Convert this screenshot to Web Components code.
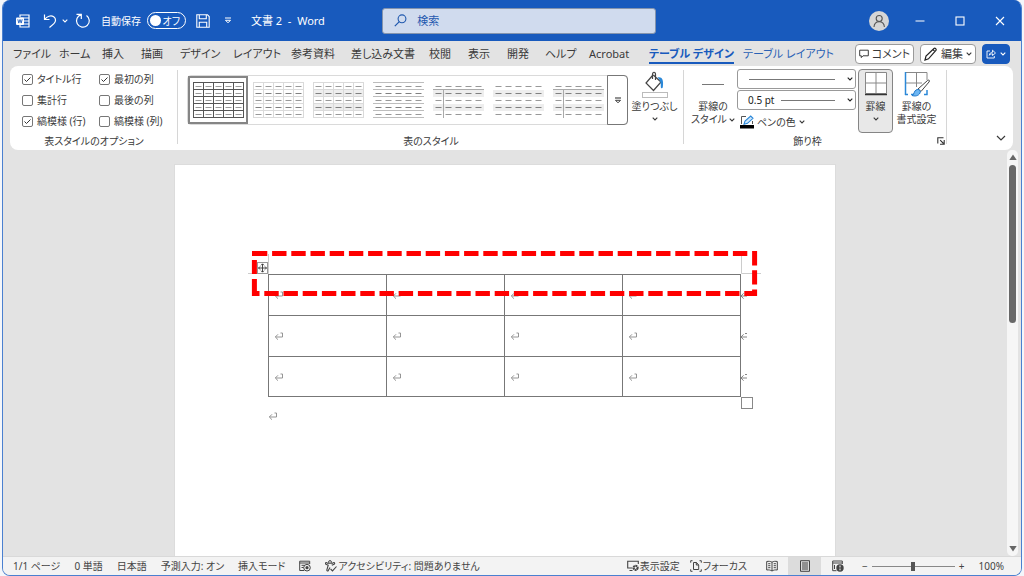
<!DOCTYPE html>
<html lang="ja">
<head>
<meta charset="utf-8">
<title>文書 2 - Word</title>
<style>
html, body { margin: 0; height: 100%; }
body {
  background: #f4f6fa; color: #3a3a3a;
  font-family: "Noto Sans", "Noto Sans CJK JP", sans-serif;
  font-size: 10px; line-height: 14px; font-feature-settings: "palt";
  --blue: #185abd; --chrome: #e3e3e3; --line: #d4d4d4;
}
</style>
</head>
<body>
<word-window></word-window>
<script>
const ICONS = {
  word: ['0 0 14 14', '<path d="M4 3V1h9v12H4v-2M4 4h9M7 7h6M7 10h6" fill="none" stroke="currentColor" stroke-width="1.2"/><rect x="0" y="3.5" width="8" height="7.5" rx="1" fill="#fff"/><path d="M1.8 5.3l1 3.8 1.2-3.6 1.2 3.6 1-3.8" fill="none" stroke="#185abd" stroke-width=".9"/>'],
  undo: ['0 0 14 16', '<path d="M1.5 1.5v5h5M1.8 6.3C4 3.4 7.8 1.8 10.700 3.7c2.600 1.900 2.200 5.100.2 6.900L6.500 14.500" fill="none" stroke="currentColor" stroke-width="1.2"/>'],
  redo: ['0 0 16 16', '<path d="M1.500 1.300H6.300V6M6.300 1.600A6.400 6.400 0 1 0 11.500 2.500" fill="none" stroke="currentColor" stroke-width="1.2"/>'],
  chev: ['0 0 6 4', '<path d="M.7.7L3 3 5.300.7" fill="none" stroke="currentColor" stroke-width="1.1"/>'],
  chevBig: ['0 0 10 6', '<path d="M1 1l4 4 4-4" fill="none" stroke="currentColor" stroke-width="1.2"/>'],
  more: ['0 0 8 7', '<path d="M1 1h6" stroke="currentColor" stroke-width="1.1"/><path d="M1.500 3.300h5L4 5.800z" fill="none" stroke="currentColor"/>'],
  save: ['0 0 14 14', '<path d="M.8.8h10.700l1.700 1.700v10.700H.8zM3.300.8v4h7v-4M3.300 13.200V8.200h7.400v5" fill="none" stroke="currentColor" stroke-width="1.1"/>'],
  search: ['0 0 13 13', '<circle cx="8" cy="4.800" r="3.900" fill="none" stroke="currentColor" stroke-width="1.1"/><path d="M5.300 7.700L.8 12.200" stroke="currentColor" stroke-width="1.2"/>'],
  user: ['0 0 20 20', '<circle cx="10" cy="10" r="10" fill="#d6d6d6"/><g fill="none" stroke="#555" stroke-width="1.1"><circle cx="10.200" cy="7.500" r="3"/><path d="M5 16c.2-3.500 2-5.300 5.200-5.300s5 1.800 5.200 5.300"/></g>'],
  min: ['0 0 10 10', '<path d="M.5 5h9" stroke="currentColor" stroke-width="1.1"/>'],
  max: ['0 0 10 10', '<rect x="1" y="1" width="8" height="8" fill="none" stroke="currentColor" stroke-width="1.1"/>'],
  close: ['0 0 10 10', '<path d="M1 1l8 8M9 1L1 9" stroke="currentColor" stroke-width="1.1"/>'],
  comment: ['0 0 10 10', '<path d="M.7 1.200h8.600v5.600H4L2.300 8.600V6.800H.7z" fill="none" stroke="currentColor"/>'],
  pencil: ['0 0 14 14', '<path d="M1 13l1-4 8-7.500c1-.9 2.800.7 1.900 1.900L4.500 11.800zM9 2.600l2.200 2.200" fill="none" stroke="#222" stroke-width="1.200"/>'],
  share: ['0 0 10 10', '<path d="M4 2H1v7h7.300V7M3.300 6.300C3.600 4 5 3.300 6.500 3.300V1.200L9.500 4 6.500 6.500V4.800C5 4.800 4 5.200 3.300 6.300z" fill="none" stroke="currentColor" stroke-width=".9"/>'],
  bucket: ['0 0 22 22', '<path d="M8.500 4.500L2 12l7.500 7.500L17 11 9.300 4M8.500 8V3.500c0-3 3-3 3 0V9" fill="none" stroke="#444" stroke-width="1.200"/><path d="M13.500 6.500c4-1 6.500 1.500 5.300 9.800-.3 1.600-2 1.300-2-.3.200-4-.3-6.500-3.300-9.500z" fill="#2b88d8"/>'],
  pen: ['0 0 14 14', '<path d="M6 1.500H1.500V9M12.500 6v3" fill="none" stroke="#555"/><path d="M4 9.200l1-3.200 5.700-5 2.300 2.300-5.500 5z" fill="#cfe6fa" stroke="#2b88d8" stroke-width="1.1"/><rect y="10" width="14" height="3.500" fill="#000"/>'],
  borders: ['0 0 24 25', '<path d="M1.500 1.500h21v21h-21zM12 2v20M2 12h20" fill="#fff" stroke="#888"/><path d="M1 23.500h22" stroke="#333" stroke-width="1.500"/>'],
  brush: ['0 0 26 26', '<path d="M2 1.500h21V9M12.500 2v14M2 12h16" fill="none" stroke="#888"/><path d="M1.500 1v23M1 23.500h3M7 23.500h3M20 23.500h3V19" stroke="#2b88d8" stroke-width="1.500" fill="none"/><path d="M14 18L23.500 9.500c1.500-1 2.600 0 1.500 1.500L17 20.500z" fill="#fff" stroke="#444"/><path d="M8 24.500c2.500-.5 1.500-5 5-6 2.500-.5 4 1.500 3 3.500-1.500 3-5 3.500-8 2.500z" fill="#6db6f2" stroke="#1c76c8"/>'],
  launcher: ['0 0 8 8', '<path d="M6.500.8H.8v5.700M3.200 3.200l3.300 3.300M7.200 3v4.200H3" fill="none" stroke="#333" stroke-width="1.1"/>'],
  ret: ['0 0 10 10', '<path d="M6.500 2h2v4H1.500M4 3.300L1.300 6 4 8.700" fill="none" stroke="#8a8a8a" stroke-width=".9"/>'],
  retEnd: ['0 0 10 10', '<path d="M5 2.500h2M7 6H1M3.600 3.300L1 6l2.600 2.700" fill="none" stroke="#777" stroke-width=".9"/>'],
  up: ['0 0 8 7', '<path d="M4 .5L7.700 6H.3z" fill="#666"/>'],
  down: ['0 0 8 7', '<path d="M4 6.500L7.700 1H.3z" fill="#666"/>'],
  macro: ['0 0 12 12', '<path d="M5 10.500H.7V1.200h10V4M.7 3h10M2.500 5.300h3M2.500 7.500h2" fill="none" stroke="currentColor"/><circle cx="8" cy="7.700" r="3.300" fill="none" stroke="currentColor"/><circle cx="8" cy="7.700" r="1.600" fill="currentColor"/>'],
  access: ['0 0 12 12', '<circle cx="5" cy="2" r="1.400" fill="none" stroke="currentColor"/><path d="M3.700 3.700L1.300 2.500C.2 2.600.2 3.800 1 4.200l2.200 1L1.800 10c0 1.200 1.100 1.300 1.500.5L5 7.500M6.300 3.700l2.500-1.200c1.100.1 1.100 1.300.3 1.700L6.800 5.200M5.600 9l1.900 1.900L11.500 6.500" fill="none" stroke="currentColor" stroke-width="1.100"/>'],
  display: ['0 0 12 12', '<path d="M5.500 8H.7V1.200h10.600V4M2.500 10.500h3" fill="none" stroke="currentColor" stroke-width="1.100"/><circle cx="8.600" cy="7.800" r="2.300" fill="none" stroke="currentColor" stroke-width="1.600" stroke-dasharray="1.800 .6"/><circle cx="8.600" cy="7.800" r="1.600" fill="none" stroke="currentColor"/>'],
  focus: ['0 0 12 12', '<path d="M2.500.7H.7v2M9.500.7h1.800v2M.7 9.300v2h1.800M11.300 9.300v2H9.500M3.500 2.500h3L8.700 5v4.500H3.500zM6.300 2.500V5h2.300" fill="none" stroke="currentColor"/>'],
  read: ['0 0 12 12', '<path d="M6 2.200C4.500 1.200 2.500 1.200.7 1.500v8.500c2-.3 3.800 0 5.300 1 1.500-1 3.300-1.300 5.300-1V1.500C9.500 1.200 7.500 1.200 6 2.200V11M2.200 3.700h2.200M2.200 5.700h2.200M2.200 7.700h2.200M7.700 3.700h2.200M7.700 5.700h2.200M7.700 7.700h2.200" fill="none" stroke="currentColor"/>'],
  print: ['0 0 12 12', '<path d="M1.500.7h9v10.600h-9zM3 3h6M3 5h6M3 7h6M3 9h6" fill="none" stroke="currentColor"/>'],
  web: ['0 0 12 12', '<path d="M4.500 10.700H.7V1h9.600v3M.7 3h9.600M2.500 5v4" fill="none" stroke="currentColor"/><circle cx="8" cy="8" r="3.700" fill="currentColor"/><path d="M8 5.500v2M8 8.500v1.800" stroke="#fff"/>']
};

function define(name, html, setup) {
  const template = document.createElement('template');
  template.innerHTML = html;
  customElements.define(name, class extends HTMLElement {
    connectedCallback() {
      if (this.shadowRoot) return;
      this.attachShadow({ mode: 'open' }).append(template.content.cloneNode(true));
      if (setup) setup(this, this.shadowRoot);
    }
  });
}

const BTN = 'button{font:inherit;font-feature-settings:inherit;color:inherit;background:none;border:0;padding:0;margin:0;line-height:inherit;display:inline-flex;align-items:center;justify-content:center}';

define('ui-icon', '<style>:host{display:block;flex:none}svg{display:block}</style>', (el, root) => {
  const [box, body] = ICONS[el.getAttribute('name')];
  const [, , w, h] = box.split(' ');
  root.innerHTML += `<svg viewBox="${box}" width="${w}" height="${h}" aria-hidden="true">${body}</svg>`;
});

define('title-bar', `<style>
:host{display:grid;grid-template-columns:380fr 274fr 366fr;align-items:center;height:41px;background:var(--blue);color:#fff}
${BTN}
.left{display:flex;align-items:center;padding-left:13px;white-space:nowrap}
.undo{margin-left:13px;gap:5px}.redo{margin:0 10px 0 7px}
label{display:flex;align-items:center;gap:6px}
.track{position:relative;display:flex;align-items:center;justify-content:flex-end;box-sizing:border-box;width:39px;height:17px;padding-right:5px;border:1px solid #fff;border-radius:9px}
.track::before{content:"";width:11px;height:11px;border-radius:50%;background:#fff;margin-right:auto;margin-left:2px}
.track input{position:absolute;inset:0;margin:0;opacity:0}
.save{margin:0 14px 0 10px}
h1{font-size:11px;font-weight:400;margin:0 0 0 19px}
.search{display:flex;align-items:center;gap:10px;box-sizing:border-box;height:26px;padding:0 11px;border:1px solid #8494ad;border-radius:3px;background:#d0dbee;color:#1f58ae}
.search input{flex:1;min-width:0;font:inherit;font-size:11px;background:none;border:0;outline:0;padding:0;color:inherit}
.search input::placeholder{color:#1f58ae;opacity:1}
.right{display:flex;justify-content:flex-end;align-items:center;gap:30px;padding-right:16px}
.right .me{margin-right:-4px}
</style>
<div class="left"><ui-icon name="word"></ui-icon>
<button class="undo" aria-label="元に戻す"><ui-icon name="undo"></ui-icon><ui-icon name="chev"></ui-icon></button>
<button class="redo" aria-label="やり直し"><ui-icon name="redo"></ui-icon></button>
<label><span>自動保存</span><span class="track"><input type="checkbox" role="switch" aria-label="自動保存"><span>オフ</span></span></label>
<button class="save" aria-label="保存"><ui-icon name="save"></ui-icon></button>
<button aria-label="カスタマイズ"><ui-icon name="more"></ui-icon></button>
<h1>文書 2&nbsp; -&nbsp; Word</h1></div>
<div class="search"><ui-icon name="search"></ui-icon><input type="search" placeholder="検索" aria-label="検索"></div>
<div class="right"><button class="me" aria-label="アカウント"><ui-icon name="user"></ui-icon></button>
<button aria-label="最小化"><ui-icon name="min"></ui-icon></button><button aria-label="最大化"><ui-icon name="max"></ui-icon></button><button aria-label="閉じる"><ui-icon name="close"></ui-icon></button></div>`);

define('ribbon-tab', `<style>
:host{display:block;justify-self:start}
a{display:block;color:inherit;text-decoration:none;white-space:nowrap;line-height:16px;border-bottom:2px solid transparent}
:host([accent]){color:#2b62b5}
:host([selected]){font-weight:700;color:#185abd}
:host([selected]) a{border-color:#185abd}
</style><a href="#"><slot></slot></a>`);

define('ribbon-tabs', `<style>
:host{display:flex;align-items:center;justify-content:space-between;height:25px;padding:0 11px 0 10px;font-size:11px;color:#3a3a3a}
${BTN}
nav{display:grid;grid-template-columns:46px 43px 39px 39px 53px 58px 60px 78px 39px 39px 38px 44px 60px 94px 90px;margin-top:2px}
.actions{display:flex;gap:6px;flex:none}
button{box-sizing:border-box;height:20px;gap:3px;padding:0 3px;border:1px solid #9a9a9a;border-radius:4px;background:#fff;white-space:nowrap}
.share{background:var(--blue);border-color:var(--blue);color:#fff;gap:4px}
</style><nav>
<ribbon-tab>ファイル</ribbon-tab><ribbon-tab>ホーム</ribbon-tab><ribbon-tab>挿入</ribbon-tab><ribbon-tab>描画</ribbon-tab><ribbon-tab>デザイン</ribbon-tab><ribbon-tab>レイアウト</ribbon-tab><ribbon-tab>参考資料</ribbon-tab><ribbon-tab>差し込み文書</ribbon-tab><ribbon-tab>校閲</ribbon-tab><ribbon-tab>表示</ribbon-tab><ribbon-tab>開発</ribbon-tab><ribbon-tab>ヘルプ</ribbon-tab><ribbon-tab>Acrobat</ribbon-tab><ribbon-tab selected>テーブル デザイン</ribbon-tab><ribbon-tab accent>テーブル レイアウト</ribbon-tab></nav>
<div class="actions"><button><ui-icon name="comment"></ui-icon>コメント</button><button><ui-icon name="pencil"></ui-icon>編集<ui-icon name="chev"></ui-icon></button><button class="share" aria-label="共有"><ui-icon name="share"></ui-icon><ui-icon name="chev"></ui-icon></button></div>`);

define('check-item', `<style>
:host{display:block}
label{display:flex;align-items:center;gap:4px;white-space:nowrap}
input{appearance:none;flex:none;box-sizing:border-box;width:11px;height:11px;margin:0;border:1px solid #777;border-radius:2px;background:#fff}
input:checked{background:#fff url("data:image/svg+xml,%3Csvg xmlns='http://www.w3.org/2000/svg' viewBox='0 0 9 9'%3E%3Cpath d='M1.500 4.500l2 2 4-4' fill='none' stroke='%23333'/%3E%3C/svg%3E")}
</style><label><input type="checkbox"><span><slot></slot></span></label>`, (el, root) => {
  root.querySelector('input').checked = el.hasAttribute('checked');
});

define('ribbon-group', `<style>
:host{display:flex;flex-direction:column;justify-content:space-between;box-sizing:border-box;position:relative}
:host::after{content:"";position:absolute;right:0;top:1px;bottom:4px;width:1px;background:#d6d6d6}
footer{text-align:center;white-space:nowrap;line-height:14px}
:host([launcher]) footer{padding-right:16px}
</style><slot></slot><footer></footer>`, (el, root) => {
  root.querySelector('footer').textContent = el.getAttribute('label');
});

define('style-thumb', `<style>
:host{display:block;flex:none}
button{display:grid;place-items:center;box-sizing:border-box;width:60px;height:48px;border:0;padding:0;background:none}
:host([selected]) button{border:2px solid #858585;background:#fff}
svg{display:block}
</style><button></button>`, (el, root) => {
  const kind = el.getAttribute('kind');
  let s = '';
  const line = (x1, y1, x2, y2, c) => s += `<path d="M${x1} ${y1}L${x2} ${y2}" stroke="${c}"/>`;
  const stripes = ['banded', 'header', 'plain', 'both'].includes(kind);
  if (stripes) for (const y of [8, 22]) s += `<rect x="0" y="${y}" width="51" height="7" fill="#eee"/>`;
  const grid = { grid: '#555', light: '#dadada', banded: '#dadada' }[kind];
  if (grid || kind === 'rows') for (let r = 0; r < 6; r++) line(0, r * 7 + .5, 51, r * 7 + .5, grid || '#bdbdbd');
  if (grid) for (let c = 0; c < 6; c++) line(c * 10 + .5, 0, c * 10 + .5, 36, grid);
  if (kind === 'header' || kind === 'both') { line(0, 7.5, 51, 7.5, '#aaa'); line(10.5, 7, 10.5, 36, '#aaa'); }
  for (let r = 0; r < 5; r++) for (let c = 0; c < 5; c++) line(c * 10 + 2.5, r * 7 + 4.5, c * 10 + 8.5, r * 7 + 4.5, r % 2 && kind !== 'grid' ? '#808080' : '#999');
  const b = root.querySelector('button');
  b.setAttribute('aria-label', 'スタイル ' + kind);
  b.innerHTML = `<svg viewBox="0 0 51 36" width="51" height="36">${s}</svg>`;
});

define('line-select', `<style>
:host{display:block}
.box{display:grid;align-items:center;height:20px;box-sizing:border-box;border:1px solid #999;border-radius:3px;background:#fff;color:#222}
.box>*{grid-area:1/1}
select{appearance:none;width:100%;height:18px;border:0;background:none;padding:0 10px;font:inherit;color:inherit}
i{height:1px;background:#777;margin:0 20px 0 11px;pointer-events:none}
:host([text]) i{margin-left:43px}
ui-icon{justify-self:end;margin-right:2px;pointer-events:none}
</style><div class="box"><select><option></option></select><i></i><ui-icon name="chev"></ui-icon></div>`, (el, root) => {
  root.querySelector('option').textContent = el.getAttribute('text') || '';
  root.querySelector('select').setAttribute('aria-label', el.getAttribute('label'));
});

define('tool-button', `<style>
:host{display:block}
button{display:flex;flex-direction:column;align-items:center;width:100%;height:100%;box-sizing:border-box;border:1px solid transparent;border-radius:4px;background:none;padding:1px 0;font:inherit;font-feature-settings:inherit;color:inherit;line-height:13px;white-space:nowrap}
:host([pressed]) button{background:#e8e8e8;border-color:#858585}
.art{display:flex;flex-direction:column;align-items:center;height:29px}
.text{display:flex;flex-direction:column;align-items:center}
::slotted(ui-icon:not([slot])){margin-top:4px}
</style><button><span class="art"><slot name="art"></slot></span><span class="text"><slot></slot></span></button>`);

define('ribbon-panel', `<style>
:host{display:flex;margin:0 8px 0 7px;height:84px;box-sizing:border-box;padding:3px 0 2px;background:#fff;border-radius:8px}
${BTN}
.opts{flex:none;width:168px}
.checks{display:grid;grid-template-columns:77px 1fr;row-gap:7px;padding:3px 0 0 12px}
.styles{flex:none;width:506px}
.row{display:flex;align-items:flex-start}
.gallery{display:flex;flex:none;border:1px solid #dadada;border-radius:4px;margin:6px 0 0 9px}
.gallery .more{width:21px;margin:-1px;border:1px solid #777;border-radius:0 4px 4px 0}
.fill{width:53px;height:62px}
.fill b{width:26px;height:6px;box-sizing:border-box;border:1px solid #bbb;margin-top:-1px}
.bord{flex:none;width:263px}
.bord .row{padding-left:7px;gap:2px}
.kind{width:44px;height:62px}.kind b{width:22px;height:1px;background:#777;margin-top:13px}
.inline{display:flex;align-items:center;gap:2px}
.fields{display:grid;width:119px;row-gap:1px}
.pen{justify-self:start;gap:3px;padding-left:3px;height:22px}
.press{width:35px;height:64px}
.fmt{width:43px;height:62px}
.launch{position:absolute;right:2px;bottom:3px}
.end{flex:1;display:flex;align-items:flex-end;justify-content:flex-end;padding:0 7px 7px}
</style>
<ribbon-group class="opts" label="表スタイルのオプション"><div class="checks">
<check-item checked>タイトル行</check-item><check-item checked>最初の列</check-item><check-item>集計行</check-item><check-item>最後の列</check-item><check-item checked>縞模様 (行)</check-item><check-item>縞模様 (列)</check-item></div></ribbon-group>
<ribbon-group class="styles" label="表のスタイル"><div class="row"><div class="gallery">
<style-thumb kind="grid" selected></style-thumb><style-thumb kind="light"></style-thumb><style-thumb kind="banded"></style-thumb><style-thumb kind="rows"></style-thumb><style-thumb kind="header"></style-thumb><style-thumb kind="plain"></style-thumb><style-thumb kind="both"></style-thumb>
<button class="more" aria-label="その他"><ui-icon name="more"></ui-icon></button></div>
<tool-button class="fill"><ui-icon slot="art" name="bucket"></ui-icon><b slot="art"></b>塗りつぶし<ui-icon name="chev"></ui-icon></tool-button></div></ribbon-group>
<ribbon-group class="bord" label="飾り枠" launcher><div class="row">
<tool-button class="kind"><b slot="art"></b><span>罫線の</span><span class="inline">スタイル<ui-icon name="chev"></ui-icon></span></tool-button>
<div class="fields"><line-select label="ペンのスタイル"></line-select><line-select label="ペンの太さ" text="0.5 pt"></line-select>
<button class="pen"><ui-icon name="pen"></ui-icon>ペンの色<ui-icon name="chev"></ui-icon></button></div>
<tool-button class="press" pressed><ui-icon slot="art" name="borders"></ui-icon>罫線<ui-icon name="chev"></ui-icon></tool-button>
<tool-button class="fmt"><ui-icon slot="art" name="brush"></ui-icon><span>罫線の</span><span>書式設定</span></tool-button>
</div><button class="launch" aria-label="詳細"><ui-icon name="launcher"></ui-icon></button></ribbon-group>
<div class="end"><button aria-label="リボンを折りたたむ"><ui-icon name="chevBig"></ui-icon></button></div>`);

define('doc-table', `<style>
:host{display:block;position:relative}
table{width:100%;border-collapse:collapse;table-layout:fixed}
td{height:41px;box-sizing:border-box;border:1px solid #777;padding:0 5px;position:relative}
tr:last-child td{height:40px}
.end{position:absolute;left:100%;top:15px}
svg{position:absolute;left:-20px;top:-24px}
</style><table><tbody></tbody></table>
<svg width="513" height="164" viewBox="0 0 513 164"><g fill="none">
<path d="M0 23.500H20.500V4M513 23.500H493.500V4" stroke="#ccc"/>
<rect x="9.500" y="12.500" width="10" height="11" fill="#fff" stroke="#999"/>
<path d="M10.500 18h8M14.500 14v8M13 15.300l1.500-1.500 1.500 1.500M13 20.700l1.500 1.500 1.500-1.500M12 16.500L10.500 18l1.500 1.500M17 16.500l1.500 1.500-1.500 1.500" stroke="#333" stroke-width=".9"/>
<rect x="493.500" y="147.500" width="11" height="11" fill="#fff" stroke="#888"/>
<path d="M6.400 3.500H506.600V43.500H6.400" stroke="#f00" stroke-width="5" stroke-dasharray="14.400 4.800" stroke-dashoffset="1.500"/>
<path d="M4 3.500H8M6.400 10V24M6.400 29V46" stroke="#f00" stroke-width="5"/></g></svg>`, (el, root) => {
  const body = root.querySelector('tbody');
  for (let r = 0; r < 3; r++) {
    const tr = body.insertRow();
    for (let c = 0; c < 4; c++) tr.insertCell().innerHTML = '<ui-icon name="ret"></ui-icon>' + (c === 3 ? '<ui-icon class="end" name="retEnd"></ui-icon>' : '');
  }
});

define('doc-area', `<style>
:host{display:flex;background:var(--chrome);overflow:hidden}
main{flex:1;display:flex;justify-content:center;padding-top:15px;overflow:hidden}
article{box-sizing:border-box;width:660px;padding:109px 94px 0 93px;background:#fff;outline:1px solid #dcdcdc}
.mark{margin-top:14px}
aside{display:flex;flex-direction:column;align-items:center;box-sizing:border-box;width:11px;margin-right:3px;padding:4px 0;gap:4px;background:#f6f6f6;border-radius:5px}
.bar{flex:1;width:7px;display:flex;flex-direction:column}
.bar i{height:42%;border-radius:4px;background:#686868}
</style><main><article><doc-table></doc-table><ui-icon class="mark" name="ret"></ui-icon></article></main>
<aside><ui-icon name="up"></ui-icon><div class="bar"><i></i></div><ui-icon name="down"></ui-icon></aside>`);

define('status-bar', `<style>
:host{display:flex;justify-content:space-between;box-sizing:border-box;height:19px;padding:0 17px 0 10px;background:#f3f3f3;border-top:1px solid #d9d9d9;color:#444;white-space:nowrap}
${BTN}
div{display:flex;align-items:center;gap:14px}
.icon{gap:1px}
.views{gap:0}.views button{width:33px;height:18px}.views .on{background:#dcdcdc}
.right{gap:10px}.views{margin:0 -2px 0 -2px}
.zoom{gap:4px;margin-right:4px}
input{appearance:none;width:83px;height:12px;margin:0;background:linear-gradient(#888,#888) center/100% 1px no-repeat}
input::-webkit-slider-thumb{appearance:none;width:4px;height:9px;background:#555}
</style>
<div><button>1/1 ページ</button><button>0 単語</button><button>日本語</button><button>予測入力: オン</button><button>挿入モード</button><button aria-label="マクロの記録"><ui-icon name="macro"></ui-icon></button><button class="icon"><ui-icon name="access"></ui-icon>アクセシビリティ: 問題ありません</button></div>
<div class="right"><button class="icon"><ui-icon name="display"></ui-icon>表示設定</button><button class="icon"><ui-icon name="focus"></ui-icon>フォーカス</button>
<div class="views"><button aria-label="閲覧モード"><ui-icon name="read"></ui-icon></button><button class="on" aria-label="印刷レイアウト"><ui-icon name="print"></ui-icon></button><button aria-label="Web レイアウト"><ui-icon name="web"></ui-icon></button></div>
<div class="zoom"><button>−</button><input type="range" min="0" max="100" value="50" aria-label="ズーム"><button>+</button></div><button>100%</button></div>`);

define('word-window', `<style>
:host{display:flex;flex-direction:column;box-sizing:border-box;height:100vh;min-height:360px;margin:0 2px;background:var(--chrome);border:solid #4a80d0;border-width:0 1px 1px;border-radius:8px;overflow:hidden}
doc-area{flex:1;min-height:0}
title-bar,ribbon-tabs,ribbon-panel,status-bar{flex:none}
</style><title-bar></title-bar><ribbon-tabs></ribbon-tabs><ribbon-panel></ribbon-panel><doc-area></doc-area><status-bar></status-bar>`);
</script>
</body>
</html>
